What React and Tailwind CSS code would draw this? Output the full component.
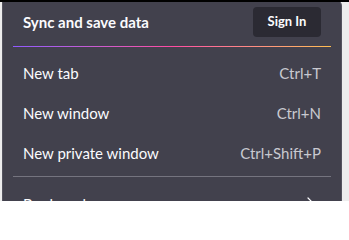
import React from "react";

const Chevron = () => (
  <svg width="16" height="16" viewBox="0 0 16 16" fill="none" className="shrink-0">
    <path d="M3 2l6 6-6 6" stroke="#fbfbfe" strokeWidth="1.2" strokeLinecap="round" strokeLinejoin="round" />
  </svg>
);

function Item({ label, shortcut, chevron }) {
  return (
    <div className="flex h-[40px] items-center justify-between px-[10px] text-[15px] text-[#fbfbfe]">
      <span>{label}</span>
      {shortcut && <span className="text-[#c9c9d0]">{shortcut}</span>}
      {chevron && <Chevron />}
    </div>
  );
}

export default function App() {
  return (
    <div
      className="w-[349px] h-[201px] overflow-hidden border-t-2 border-black bg-[#ededed]"
      style={{ fontFamily: 'Lato, "Noto Sans", sans-serif' }}
    >
      <div className="relative -mt-[2px] ml-[2px] h-[203px] w-[340px] overflow-hidden rounded-tr-[6px] border-x border-[#55545f] bg-[#42414d]">
        <div className="flex items-center justify-between px-[20px] pt-[7px] pb-[9px]">
          <span className="text-[15px] font-bold text-[#fbfbfe]">Sync and save data</span>
          <button className="flex h-[30px] w-[68px] items-center justify-center rounded-[4px] bg-[#2b2a33] text-[13px] font-bold text-[#fbfbfe]">
            Sign In
          </button>
        </div>
        <div className="mx-[10px] h-px bg-gradient-to-r from-[#9059ff] via-[#ff4aa2] to-[#ffbd4f]" />
        <div className="px-[10px] pt-[6px]">
          <Item label="New tab" shortcut="Ctrl+T" />
          <Item label="New window" shortcut="Ctrl+N" />
          <Item label="New private window" shortcut="Ctrl+Shift+P" />
          <div className="mt-[3px] mb-[7px] h-px bg-[#75747f]" />
          <Item label="Bookmarks" chevron />
        </div>
      </div>
    </div>
  );
}
